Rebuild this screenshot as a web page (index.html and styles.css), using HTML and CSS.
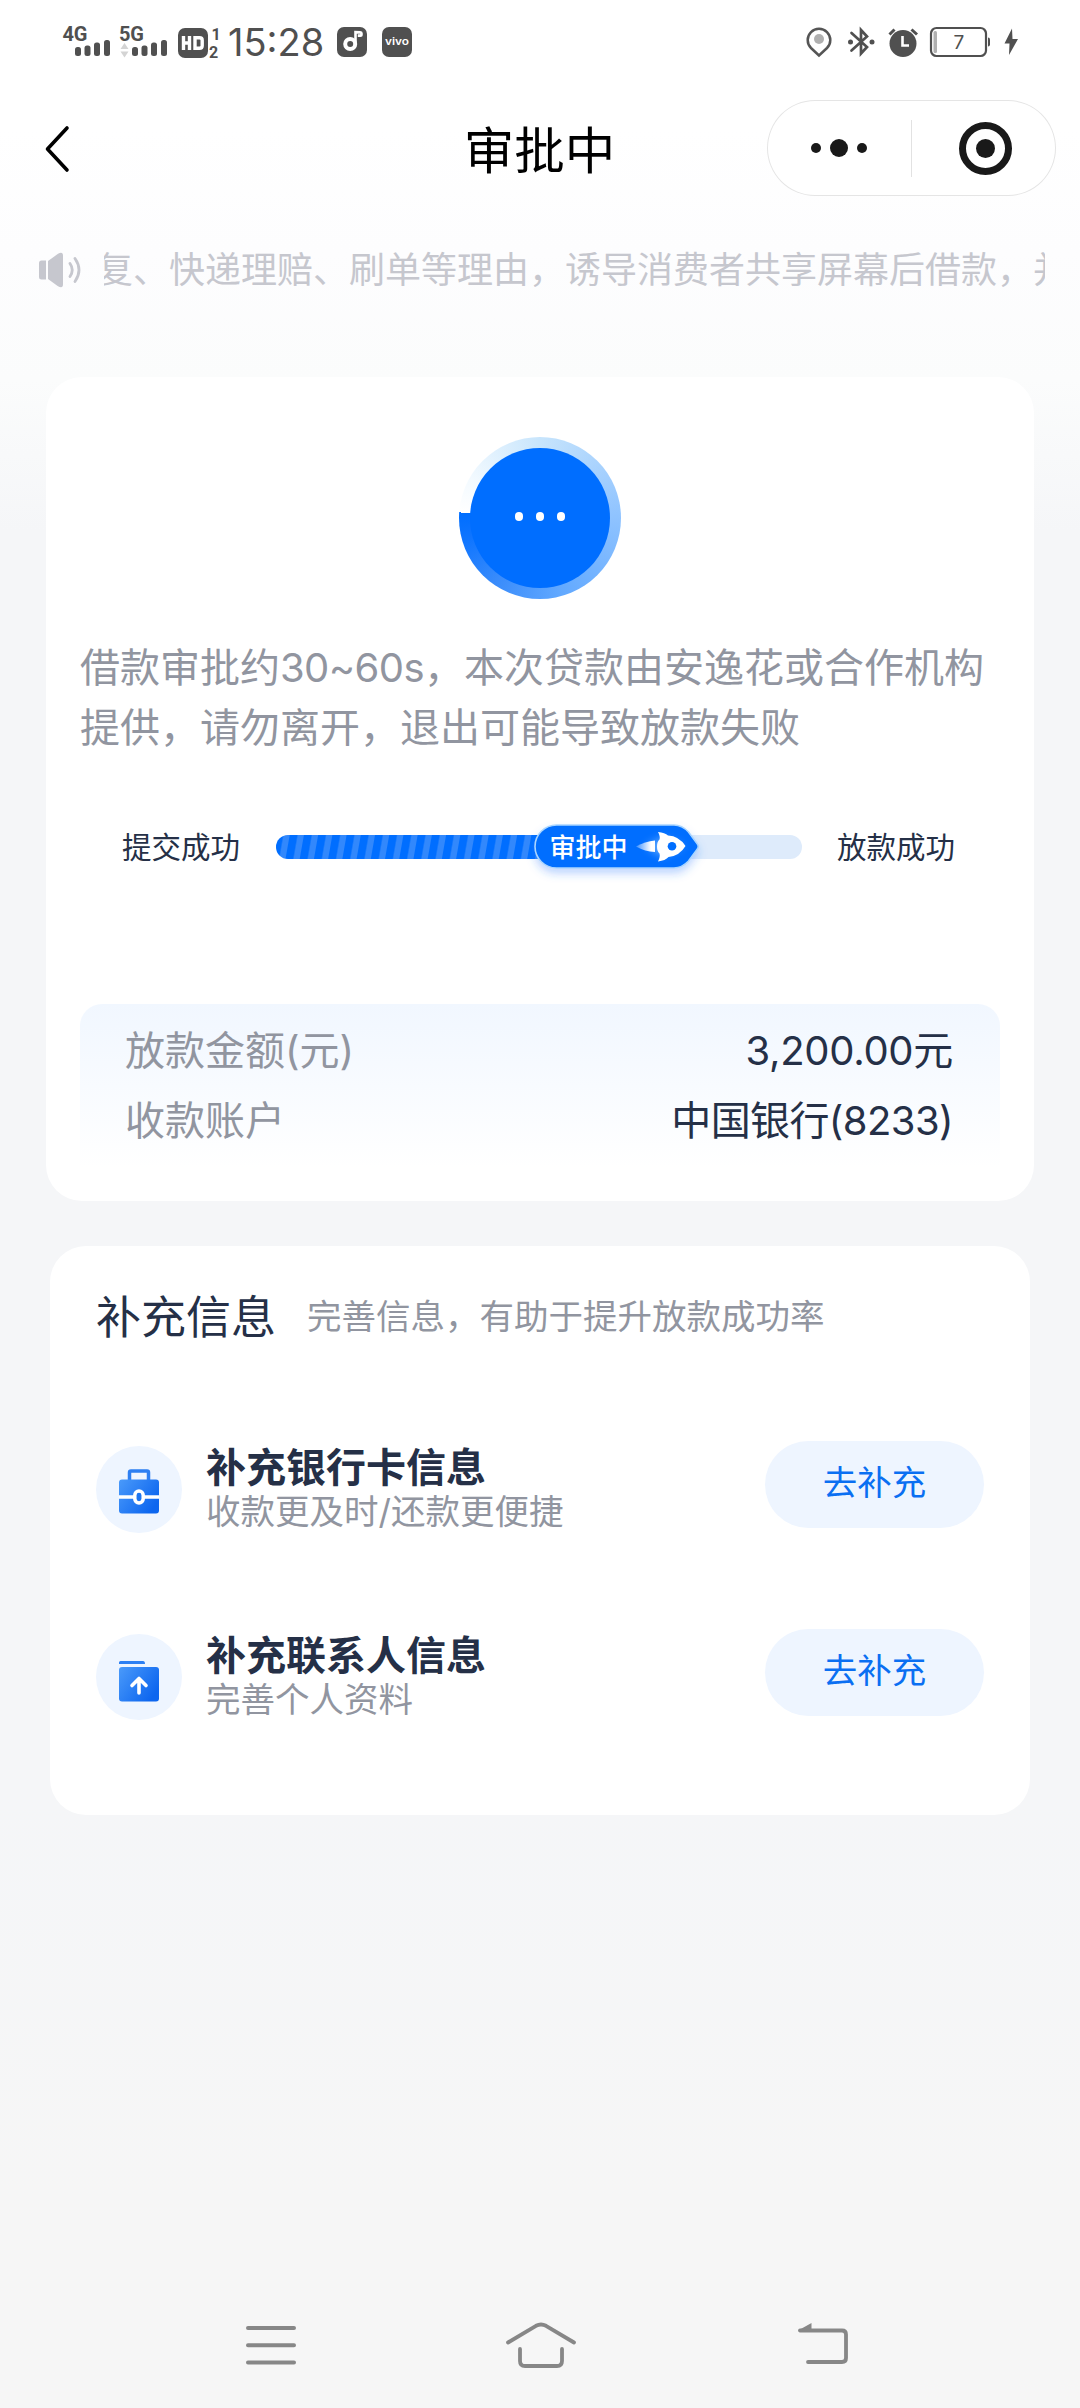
FILE: index.html
```html
<!DOCTYPE html>
<html lang="zh-CN">
<head>
<meta charset="utf-8">
<title>审批中</title>
<link rel="stylesheet" href="styles.css">
</head>
<body>
<div class="screen">
  <header class="status">
    <div class="status-left">
      <svg class="signals" width="106" height="40" viewBox="60 22 106 40">
        <g class="net"><text x="62.500" y="40.500" textLength="25">4G</text><text x="119" y="40.500" textLength="25">5G</text></g>
        <g fill="#505050">
          <rect x="75" y="47" width="6" height="9" rx="2.500"/><rect x="84.500" y="45.500" width="6" height="10.500" rx="2.500"/><rect x="94" y="42.500" width="6" height="13.500" rx="2.500"/><rect x="104" y="40" width="6" height="16" rx="2.500"/>
          <rect x="132" y="47" width="6" height="9" rx="2.500"/><rect x="141.500" y="45.500" width="6" height="10.500" rx="2.500"/><rect x="151" y="42.500" width="6" height="13.500" rx="2.500"/><rect x="161" y="40" width="6" height="16" rx="2.500"/>
        </g>
        <path d="M120.500 49l4-6 4 6zM120.500 51.500l4 6 4-6z" fill="#d4d4d4"/>
      </svg>
      <svg class="hd" width="44" height="34" viewBox="176 24 44 34">
        <rect x="177" y="27" width="30" height="30" rx="7" fill="#505050"/>
        <path d="M182.500 35v14M182.500 42h6M188.500 35v14M194 36.700h4.500q2.700 0 2.700 2.500v5.600q0 2.500-2.700 2.500H194z" fill="none" stroke="#fff" stroke-width="3.400"/>
        <g class="sim"><text x="210.500" y="38.500">1</text><text x="208" y="56.500" textLength="11">2</text></g>
      </svg>
      <span class="clock">15:28</span>
      <svg class="app" width="30" height="30" viewBox="0 0 30 30"><rect width="30" height="30" rx="7" fill="#505050"/><circle cx="13.200" cy="17" r="5" fill="none" stroke="#fff" stroke-width="4"/><path d="M18.500 17V5.200l5 .2q1 0 1 1.200v.8q0 1.200-1.200 1.200h-2.500" fill="none" stroke="#fff" stroke-width="2.600"/></svg>
      <svg width="30" height="30" viewBox="0 0 30 30"><rect width="30" height="30" rx="7" fill="#505050"/><text class="vivo" x="3" y="17.500" textLength="24" lengthAdjust="spacingAndGlyphs">vivo</text></svg>
    </div>
    <svg class="status-right" width="216" height="36" viewBox="804 24 216 36">
      <path d="M819 55.500l-8-7.500a11.300 11.300 0 1 1 16 0z" fill="none" stroke="#555" stroke-width="2.500"/><circle cx="819" cy="39" r="5" fill="#b0b0b0"/>
      <path d="M851.500 33l15.500 14-6 6.500V30l6 6.500-15.500 14" fill="none" stroke="#505050" stroke-width="2.700" stroke-linecap="round"/><circle cx="850.500" cy="42" r="2.500" fill="#505050"/><circle cx="872" cy="42" r="2.500" fill="#505050"/>
      <circle cx="903" cy="43.500" r="13.500" fill="#505050"/><path d="M902.500 36v9.500h6.500" fill="none" stroke="#fff" stroke-width="2.600"/><path d="M889.500 34.500l5-5M911.500 29.500l5.500 5" stroke="#505050" stroke-width="3"/>
      <rect x="931" y="28" width="55" height="28" rx="5.500" fill="none" stroke="#505050" stroke-width="2.200"/><rect x="933.500" y="31" width="3.500" height="22" rx="1.500" fill="#b0b0b0"/><path d="M988 37.500q2 0 2 2v5q0 2-2 2z" fill="#505050"/><text class="percent" x="953.500" y="49">7</text>
      <path d="M1012 28.500l-7.500 15h5l-.5 11.500 9-16h-5.500z" fill="#505050"/>
    </svg>
  </header>

  <nav class="titlebar">
    <svg class="back" width="28" height="50" viewBox="0 0 28 50"><path d="M24 4L4.500 25 24 46" fill="none" stroke="#000" stroke-width="3.600" stroke-linecap="round" stroke-linejoin="round"/></svg>
    <h1 class="title">审批中</h1>
    <div class="capsule">
      <svg width="289" height="96" viewBox="0 0 289 96"><g fill="#191919"><circle cx="49" cy="48" r="5"/><circle cx="72" cy="48" r="9"/><circle cx="95" cy="48" r="5"/><circle cx="218.500" cy="48.500" r="9.500"/></g><circle cx="218.500" cy="48.500" r="23" fill="none" stroke="#191919" stroke-width="7"/><path d="M144.500 20v57" stroke="#e2e2e2"/></svg>
    </div>
  </nav>

  <div class="notice">
    <svg width="44" height="36" viewBox="0 0 44 36"><g fill="#c6c7ce"><path d="M3.500 8.500H8v19H3.500Q1 27.500 1 25V11q0-2.500 2.500-2.500z"/><path d="M10 9l10-7.200q5-3 5 2.200v28q0 5.200-5 2.200L10 27z"/></g><path d="M32 11.500q4.500 6.500 0 13M37 6.500q8 11.500 0 23" fill="none" stroke="#c6c7ce" stroke-width="2.800" stroke-linecap="round"/></svg>
    <div class="ticker"><span class="ticker-text">复、快递理赔、刷单等理由，诱导消费者共享屏幕后借款，并</span></div>
  </div>

  <main class="content">
    <section class="card approval">
      <div class="spinner"><div class="disc"><i></i><i></i><i></i></div></div>
      <p class="desc">借款审批约<span class="range">30~60s</span>，本次贷款由安逸花或合作机构<br>提供，请勿离开，退出可能导致放款失败</p>
      <div class="progress">
        <span class="step">提交成功</span>
        <div class="track">
          <div class="fill"></div>
          <div class="pill">
            <svg class="pill-bg" width="174" height="64" viewBox="-4 -4 174 64">
              <defs><filter id="sh" x="-10%" y="-20%" width="120%" height="160%"><feDropShadow dx="0" dy="5" stdDeviation="4" flood-color="#2f7bff" flood-opacity=".3"/></filter><filter id="glow" x="-40%" y="-40%" width="180%" height="180%"><feGaussianBlur stdDeviation="4"/></filter><linearGradient id="flame"><stop offset="0" stop-color="#fff" stop-opacity=".25"/><stop offset=".8" stop-color="#fff"/></linearGradient></defs>
              <path d="M22.500 1H140q8 0 14.500 7l8.500 11.500q2.500 3 0 6L154.500 37q-6.500 7-14.500 7H22.500a21.500 21.500 0 0 1 0-43z" fill="#006eff" stroke="#a9d5ff" stroke-width="1.600" filter="url(#sh)"/>
              <path d="M112 22l16-8 22 8-22 10z" fill="#80bdff" opacity=".8" filter="url(#glow)"/>
              <path d="M102 22.500q9-5 19-6v11.500q-10-.5-19-5.500z" fill="url(#flame)"/>
              <path d="M124 8q7 .5 10 3.500 11 .5 17.500 10.500-6 10-17 11-3 3.500-10.500 4.500 2.500-5 1.500-8-2.500-2-2.500-7t2.500-7q1-3-1.500-7.500z" fill="#fff"/><circle cx="138" cy="22.200" r="4.300" fill="#006eff"/>
            </svg>
            <span class="pill-text">审批中</span>
          </div>
        </div>
        <span class="step">放款成功</span>
      </div>
      <dl class="summary">
        <div class="pair"><dt>放款金额(元)</dt><dd class="amount">3,200.00元</dd></div>
        <div class="pair"><dt>收款账户</dt><dd class="bank">中国银行(8233)</dd></div>
      </dl>
    </section>

    <section class="card extra">
      <div class="extra-head"><h2>补充信息</h2><span>完善信息，有助于提升放款成功率</span></div>
      <div class="item">
        <svg width="86" height="88" viewBox="0 0 86 88"><defs><linearGradient id="blue" x1="0" y1="0" x2="1" y2=".6"><stop offset="0" stop-color="#4a9afa"/><stop offset="1" stop-color="#0d66ef"/></linearGradient></defs><ellipse cx="43" cy="43.500" rx="43" ry="43.500" fill="#eef5ff"/><path d="M33.500 35v-8.500q0-1.500 1.500-1.500h16q1.500 0 1.500 1.500V35" fill="none" stroke="#2d7ff2" stroke-width="3.500"/><rect x="23" y="33.500" width="40" height="34" rx="3" fill="url(#blue)"/><path d="M23 51h40" stroke="#fff" stroke-width="3.500"/><rect x="38.800" y="45" width="8.400" height="12" rx="4.200" fill="#1d75f0" stroke="#fff" stroke-width="3.500"/></svg>
        <div class="item-text"><h3>补充银行卡信息</h3><p>收款更及时/还款更便捷</p></div>
        <button class="go">去补充</button>
      </div>
      <div class="item">
        <svg width="86" height="88" viewBox="0 0 86 88"><ellipse cx="43" cy="43" rx="43" ry="43" fill="#eef5ff"/><path d="M24.500 27H47q2 0 2 3H23v-1.500q0-1.500 1.500-1.500z" fill="#2d80f3"/><rect x="23" y="33" width="40" height="34.500" rx="3" fill="url(#blue)"/><path d="M43 59V44.500M36 51.500l7-7 7 7" fill="none" stroke="#fff" stroke-width="3.600" stroke-linecap="round" stroke-linejoin="round"/></svg>
        <div class="item-text"><h3>补充联系人信息</h3><p>完善个人资料</p></div>
        <button class="go">去补充</button>
      </div>
    </section>
  </main>

  <footer class="sysnav">
    <svg width="52" height="44" viewBox="0 0 52 44"><path d="M3 5h46M3 22.300h46M3 39.500h46" stroke="#878787" stroke-width="4" stroke-linecap="round"/></svg>
    <svg width="72" height="48" viewBox="0 0 72 48"><path d="M2 21.500L30 4.800q5-2.600 10 0l28 16.700M14 28v12q0 5 5 5h32q5 0 5-5V28" fill="none" stroke="#878787" stroke-width="3.800" stroke-linecap="round" stroke-linejoin="round"/></svg>
    <svg width="52" height="44" viewBox="0 0 52 44"><path d="M3 7.500h42q4 0 4 4V35q0 4-4 4H11" fill="none" stroke="#878787" stroke-width="3.800" stroke-linecap="round"/><path d="M1 7.500L14.500 0v8H2z" fill="#878787"/></svg>
  </footer>
</div>
</body>
</html>
```
FILE: styles.css
```css
* { box-sizing: border-box; }
body, h1, h2, h3, p, dl, dd { margin: 0; }

body {
  font-family: Inter, "Noto Sans CJK SC", sans-serif;
  font-weight: 400;
  color: #253047;
}

.screen {
  display: flex;
  flex-direction: column;
  width: 1080px;
  height: 2408px;
  overflow: hidden;
  background: linear-gradient(#fff 130px, #fdfdfe 250px, #fbfcfc 380px, #f5f6f8 530px, #f5f6f8 1800px, #f6f6f6 2200px);
}

svg { display: block; flex: none; }

/* status bar */
.status {
  display: flex;
  justify-content: space-between;
  height: 84px;
  padding: 0 60px;
}
.status-left { display: flex; align-items: center; }
.signals { margin-right: 11px; overflow: visible; }
.net text, .sim text { font: 700 20px Roboto, sans-serif; fill: #505050; }
.sim text { font-size: 16px; }
.hd { margin-right: 7px; overflow: visible; }
.clock {
  width: 99px;
  margin-right: 10px;
  font-size: 38px;
  line-height: 84px;
  letter-spacing: 0;
  color: #505050;
}
.app { margin-right: 15px; }
.vivo { font: 600 10px Inter, sans-serif; fill: #fff; }
.status-right { margin: 24px 0 0; }
.percent { font: 400 19px Inter, sans-serif; fill: #505050; }

/* title bar */
.titlebar {
  display: grid;
  grid-template-columns: 1fr auto 1fr;
  align-items: center;
  height: 128px;
  padding: 0 24px 0 43px;
}
.title {
  margin: 5px 0 0 -20px;
  font-size: 50.5px;
  font-weight: 400;
  line-height: 80px;
  color: #000;
}
.capsule {
  justify-self: end;
  width: 289px;
  height: 96px;
  border-radius: 48px;
  background: #fff;
  box-shadow: inset 0 0 0 1px #e5e5e5;
}
.back { margin-top: 1px; }

/* scrolling notice */
.notice {
  display: flex;
  align-items: center;
  gap: 22px;
  height: 116px;
  padding: 0 35px 0 38px;
}
.ticker { flex: 1; overflow: hidden; }
.ticker-text {
  display: block;
  margin-left: -7px;
  font-size: 36px;
  line-height: 60px;
  white-space: nowrap;
  color: #c6c7ce;
}

/* cards */
.content {
  display: flex;
  flex-direction: column;
  align-items: center;
  gap: 45px;
  padding-top: 49px;
}
.card { border-radius: 36px; background: #fff; }
.approval { width: 988px; height: 824px; padding: 60px 34px 0; }

.spinner {
  display: grid;
  place-items: center;
  width: 162px;
  height: 162px;
  margin: 0 auto;
  border-radius: 50%;
  background: conic-gradient(from 274deg, #fff 0deg, #f3faff 25deg, #c8e5fc 85deg, #8fc3ff 175deg, #62a9ff 250deg, #3a8cfb 300deg, #0f75ff 340deg, #006eff 360deg);
}
.disc {
  display: flex;
  align-items: center;
  justify-content: center;
  gap: 12.5px;
  width: 140px;
  height: 140px;
  padding-bottom: 3px;
  border-radius: 50%;
  background: #006eff;
}
.disc i { width: 8.5px; height: 8.5px; border-radius: 50%; background: #fff; }

.desc {
  margin-top: 39px;
  font-size: 40px;
  line-height: 60px;
  white-space: nowrap;
  color: #9195a0;
}
.range { letter-spacing: -0.6px; }

.progress {
  display: flex;
  align-items: center;
  justify-content: space-between;
  height: 60px;
  margin: 59px 45px 0 42px;
  font-size: 29.5px;
}
.step { padding-bottom: 5px; }
.track {
  position: relative;
  width: 526px;
  height: 24px;
  border-radius: 12px;
  background: #deebfb;
}
.fill {
  width: 290px;
  height: 24px;
  border-radius: 12px 0 0 12px;
  background: repeating-linear-gradient(100deg, #006eff 0 6.5px, #3288fc 8px 13px, #006eff 14px);
}
.pill { position: absolute; left: 258px; top: -11px; width: 166px; height: 46px; }
.pill-bg { position: absolute; left: -4px; top: -4px; overflow: visible; }
.pill-text {
  position: absolute;
  left: 16px;
  top: 0;
  font-size: 26px;
  font-weight: 500;
  line-height: 47px;
  white-space: nowrap;
  color: #fff;
}

.summary {
  height: 164px;
  margin-top: 127px;
  padding: 12px 47px 0 45px;
  border-radius: 22px 22px 0 0;
  background: linear-gradient(#f1f7ff, #fff);
  font-size: 40px;
}
.pair { display: flex; justify-content: space-between; line-height: 70px; }
.pair dt { color: #9195a0; }
.amount { letter-spacing: -0.3px; }
.bank { letter-spacing: -0.6px; }

.extra { width: 980px; height: 569px; padding: 34px 46px 0 46px; }
.extra-head { display: flex; align-items: center; gap: 31px; height: 68px; }
.extra-head h2 { font-size: 45px; font-weight: 400; }
.extra-head span { font-size: 34.5px; color: #9195a0; }

.item { display: flex; align-items: center; height: 90px; margin-top: 98px; }
.extra-head + .item { margin-top: 97px; }
.item-text { flex: 1; margin: -2px 0 0 24px; }
.item-text h3 { font-size: 40px; font-weight: 700; line-height: 46px; }
.item-text p { font-size: 34.5px; line-height: 42px; color: #9195a0; }
.go {
  width: 219px;
  height: 87px;
  margin-top: -12px;
  padding: 0 0 3px;
  border: 0;
  border-radius: 44px;
  background: #eef5ff;
  font: 400 34.5px/60px Inter, "Noto Sans CJK SC", sans-serif;
  color: #0a6ff2;
}

/* system navigation */
.sysnav {
  display: grid;
  grid-template-columns: 261px 291px 52px;
  align-items: center;
  height: 126px;
  margin-top: auto;
  padding-left: 245px;
}
```
